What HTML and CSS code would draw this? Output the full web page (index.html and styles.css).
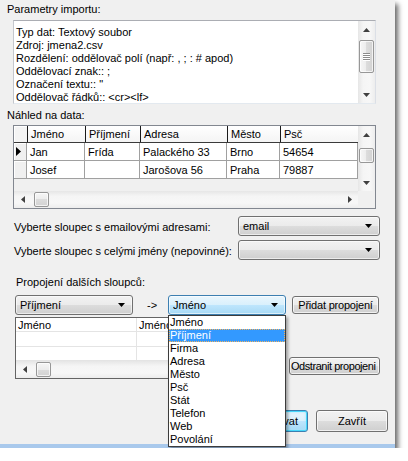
FILE: index.html
```html
<!DOCTYPE html>
<html lang="cs">
<head>
<meta charset="utf-8">
<title>Import</title>
<link rel="stylesheet" href="styles.css">
</head>
<body>
<div class="window">
  <div class="label label-params">Parametry importu:</div>
  <div class="memo">
    <div class="memo-text">
      <div>Typ dat: Textový soubor</div>
      <div>Zdroj: jmena2.csv</div>
      <div>Rozdělení: oddělovač polí (např: , ; : # apod)</div>
      <div>Oddělovací znak:: ;</div>
      <div>Označení textu:: "</div>
      <div>Oddělovač řádků:: &lt;cr&gt;&lt;lf&gt;</div>
    </div>
    <div class="vscroll memo-scroll">
      <div class="sb-btn"><svg class="arr" width="7" height="4" viewBox="0 0 7 4"><path d="M0 4h7L3.5 0z"/></svg></div>
      <div class="sb-track"><div class="thumb-v memo-thumb"><span class="grip-v"></span></div></div>
      <div class="sb-btn"><svg class="arr" width="7" height="4" viewBox="0 0 7 4"><path d="M0 0h7L3.5 4z"/></svg></div>
    </div>
  </div>

  <div class="label label-preview">Náhled na data:</div>
  <div class="grid1">
    <div class="g1-body">
      <div class="g1-row g1-head">
        <div class="ind ind-head"></div>
        <div class="hc w1">Jméno</div>
        <div class="hc w2">Příjmení</div>
        <div class="hc w3">Adresa</div>
        <div class="hc w4">Město</div>
        <div class="hc w5">Psč</div>
      </div>
      <div class="g1-row">
        <div class="ind"><svg width="5" height="9" viewBox="0 0 5 9"><path d="M0 0l5 4.5L0 9z"/></svg></div>
        <div class="dc w1">Jan</div>
        <div class="dc w2">Frída</div>
        <div class="dc w3">Palackého 33</div>
        <div class="dc w4">Brno</div>
        <div class="dc w5">54654</div>
      </div>
      <div class="g1-row">
        <div class="ind"></div>
        <div class="dc w1">Josef</div>
        <div class="dc w2"></div>
        <div class="dc w3">Jarošova 56</div>
        <div class="dc w4">Praha</div>
        <div class="dc w5">79887</div>
      </div>
      <div class="g1-blank"></div>
      <div class="hscroll">
        <div class="sb-btn-h"><svg class="arr" width="4" height="7" viewBox="0 0 4 7"><path d="M4 0v7L0 3.5z"/></svg></div>
        <div class="sb-track-h"><div class="thumb-h"></div></div>
        <div class="sb-btn-h"><svg class="arr" width="4" height="7" viewBox="0 0 4 7"><path d="M0 0v7L4 3.5z"/></svg></div>
      </div>
    </div>
    <div class="g1-side">
      <div class="vscroll g1-vscroll">
        <div class="sb-btn"><svg class="arr" width="7" height="4" viewBox="0 0 7 4"><path d="M0 4h7L3.5 0z"/></svg></div>
        <div class="sb-track"><div class="thumb-v g1-thumb"></div></div>
        <div class="sb-btn"><svg class="arr" width="7" height="4" viewBox="0 0 7 4"><path d="M0 0h7L3.5 4z"/></svg></div>
      </div>
      <div class="sb-corner"></div>
    </div>
  </div>

  <div class="field-row row-email">
    <div class="field-label">Vyberte sloupec s emailovými adresami:</div>
    <div class="combo combo-field"><span class="combo-val">email</span><svg class="combo-arr" width="7" height="4" viewBox="0 0 7 4"><path d="M0 0h7L3.5 4z"/></svg></div>
  </div>
  <div class="field-row row-names">
    <div class="field-label">Vyberte sloupec s celými jmény (nepovinné):</div>
    <div class="combo combo-field"><span class="combo-val"></span><svg class="combo-arr" width="7" height="4" viewBox="0 0 7 4"><path d="M0 0h7L3.5 4z"/></svg></div>
  </div>

  <div class="label label-links">Propojení dalších sloupců:</div>
  <div class="links-row">
    <div class="combo combo-map"><span class="combo-val">Příjmení</span><svg class="combo-arr" width="7" height="4" viewBox="0 0 7 4"><path d="M0 0h7L3.5 4z"/></svg></div>
    <span class="map-arrow">-&gt;</span>
    <div class="combo combo-map combo-focus"><span class="combo-val">Jméno</span><svg class="combo-arr" width="7" height="4" viewBox="0 0 7 4"><path d="M0 0h7L3.5 4z"/></svg></div>
    <button class="btn btn-add">Přidat propojení</button>
  </div>

  <div class="grid2-row">
    <div class="grid2">
      <div class="g2-row g2-head">
        <div class="g2c g2w1">Jméno</div>
        <div class="g2c g2w2">Jméno</div>
      </div>
      <div class="g2-row"><div class="g2c g2w1"></div><div class="g2c g2w2"></div></div>
      <div class="g2-row"><div class="g2c g2w1"></div><div class="g2c g2w2"></div></div>
      <div class="hscroll g2-hscroll">
        <div class="sb-btn-h"><svg class="arr" width="4" height="7" viewBox="0 0 4 7"><path d="M4 0v7L0 3.5z"/></svg></div>
        <div class="sb-track-h"><div class="thumb-h"></div></div>
      </div>
    </div>
    <button class="btn btn-remove">Odstranit propojeni</button>
  </div>

  <div class="bottom-row">
    <button class="btn btn-dialog btn-default">Importovat</button>
    <button class="btn btn-dialog">Zavřít</button>
  </div>

  <ul class="droplist">
    <li>Jméno</li>
    <li class="sel">Příjmení</li>
    <li>Firma</li>
    <li>Adresa</li>
    <li>Město</li>
    <li>Psč</li>
    <li>Stát</li>
    <li>Telefon</li>
    <li>Web</li>
    <li>Povolání</li>
  </ul>
</div>
</body>
</html>
```

FILE: styles.css
```css
* { box-sizing: border-box; }
html, body { margin: 0; padding: 0; background: #ffffff; }
body {
  font-family: "Liberation Sans", Arial, sans-serif;
  font-size: 11px;
  line-height: 13px;
  color: #000;
}

.window {
  position: relative;
  width: 395px;
  height: 448px;
  background: #f0f0f0;
  border-bottom: 4px solid #a9c9ec;
  box-shadow: 3px 4px 5px rgba(0, 0, 0, 0.6);
  display: flex;
  flex-direction: column;
}

.label { height: 13px; white-space: nowrap; }
.label-params { margin: 3px 0 0 7px; }
.label-preview { margin: 5px 0 0 7px; }
.label-links { margin: 16px 0 0 16px; }

/* memo */
.memo {
  margin: 4px 0 0 13px;
  width: 363px;
  height: 84px;
  background: #fff;
  border: 1px solid #dbdfe6;
  border-top-color: #abadb3;
  border-left-color: #c4c7cd;
  border-bottom-color: #e3e9ef;
  display: flex;
}
.memo-text { flex: 1; padding: 5px 0 0 2px; white-space: nowrap; overflow: hidden; }

/* scrollbars */
.vscroll {
  width: 17px;
  display: flex;
  flex-direction: column;
  background: linear-gradient(to right, #e6e6e6, #f5f5f5 30%, #f7f7f7 70%, #ededed);
}
.sb-btn { height: 17px; display: flex; align-items: center; justify-content: center; }
.sb-track { flex: 1; }
.arr { fill: #404040; display: block; }
.thumb-v {
  margin: 0 1px;
  border: 1px solid #979797;
  border-radius: 2px;
  background: linear-gradient(to right, #f6f6f6, #ececec 50%, #dcdcdc 50%, #d2d2d2);
  box-shadow: inset 0 0 0 1px rgba(255,255,255,0.7);
  display: flex;
  align-items: center;
  justify-content: center;
}
.memo-thumb { margin-top: 2px; height: 33px; }
.grip-v {
  width: 7px;
  height: 8px;
  background: repeating-linear-gradient(to bottom, #8a8a8a 0, #8a8a8a 1px, #ffffff 1px, #ffffff 2px);
}

.hscroll {
  height: 17px;
  display: flex;
  background: linear-gradient(to bottom, #e6e6e6, #f5f5f5 30%, #f7f7f7 70%, #ededed);
}
.sb-btn-h { width: 17px; display: flex; align-items: center; justify-content: center; }
.sb-track-h { flex: 1; display: flex; }
.thumb-h {
  margin: 1px 0 1px 3px;
  width: 15px;
  border: 1px solid #979797;
  border-radius: 2px;
  background: linear-gradient(to bottom, #f6f6f6, #ececec 50%, #dcdcdc 50%, #d2d2d2);
  box-shadow: inset 0 0 0 1px rgba(255,255,255,0.7);
}

/* grid 1 */
.grid1 {
  margin: 3px 0 0 13px;
  width: 363px;
  height: 84px;
  border: 1px solid #828790;
  display: flex;
  background: #f0f0f0;
}
.g1-body { width: 344px; display: flex; flex-direction: column; }
.g1-row { display: flex; height: 18px; }
.g1-head { height: 17px; border-bottom: 1px solid #3a3a3a; }
.g1-blank { flex: 1; }
.ind {
  width: 13px;
  background: #f0f0f0;
  border-right: 1px solid #a0a0a0;
  border-bottom: 1px solid #a0a0a0;
  box-shadow: inset 1px 1px 0 #ffffff;
  display: flex;
  align-items: center;
  padding-left: 2px;
}
.ind svg { fill: #000; }
.ind-head { border-bottom: none; border-right: none; background: #f4f4f4; }
.hc {
  background: linear-gradient(#ffffff, #f4f4f4);
  border-left: 1px solid #1a1a1a;
  padding: 2px 0 0 3px;
  white-space: nowrap;
  overflow: hidden;
}
.dc {
  background: #fff;
  border-right: 1px solid #a0a0a0;
  border-bottom: 1px solid #a0a0a0;
  padding: 3px 0 0 3px;
  white-space: nowrap;
  overflow: hidden;
}
.w1 { width: 58px; }
.w2 { width: 55px; }
.w3 { width: 87px; }
.w4 { width: 53px; }
.w5 { width: 78px; }
.g1-side { width: 17px; display: flex; flex-direction: column; }
.g1-vscroll { flex: 1; }
.g1-thumb { margin-top: 5px; height: 15px; }
.sb-corner { height: 17px; background: #f0f0f0; }

/* fields */
.field-row { display: flex; align-items: center; padding: 0 15px 0 14px; height: 20px; }
.row-email { margin-top: 7px; }
.row-names { margin-top: 4px; }
.field-label { flex: 1; white-space: nowrap; padding-top: 2px; }

.combo {
  height: 20px;
  border: 1px solid #707070;
  border-radius: 3px;
  background: linear-gradient(#f2f2f2, #ebebeb 50%, #dddddd 50%, #cfcfcf);
  box-shadow: inset 0 0 0 1px rgba(255,255,255,0.6);
  display: flex;
  align-items: center;
  padding: 0 7px 0 4px;
}
.combo-val { flex: 1; white-space: nowrap; overflow: hidden; }
.combo-arr { fill: #000; display: block; }
.combo-field { width: 142px; }
.combo-focus {
  border-color: #3c7fb1;
  background: linear-gradient(#eaf6fd, #d9f0fc 50%, #bee6fd 50%, #a7d9f5);
}

.links-row { display: flex; align-items: center; margin: 6px 0 0 15px; height: 20px; }
.combo-map { width: 118px; }
.map-arrow { width: 35px; padding-left: 14px; }

.btn {
  font: inherit;
  color: #000;
  margin: 0;
  padding: 0;
  border: 1px solid #707070;
  border-radius: 3px;
  background: linear-gradient(#f2f2f2, #ebebeb 50%, #dddddd 50%, #cfcfcf);
  box-shadow: inset 0 0 0 1px rgba(255,255,255,0.7);
  white-space: nowrap;
  overflow: hidden;
}
.btn-add { margin-left: 6px; width: 87px; height: 18px; letter-spacing: -0.2px; }

/* grid 2 */
.grid2-row { display: flex; margin: 2px 0 0 15px; }
.grid2 {
  width: 270px;
  height: 62px;
  border: 1px solid #646464;
  background: #fff;
  display: flex;
  flex-direction: column;
}
.g2-row { display: flex; height: 15px; }
.g2-head { height: 14px; }
.g2c {
  border-right: 1px solid #e4e4e4;
  border-bottom: 1px solid #e4e4e4;
  padding: 1px 0 0 2px;
  white-space: nowrap;
  overflow: hidden;
}
.g2w1 { width: 121px; }
.g2w2 { flex: 1; }
.g2-hscroll { margin-top: auto; }
.btn-remove { margin: 40px 0 0 4px; width: 91px; height: 18px; letter-spacing: -0.45px; text-align: left; padding-left: 1px; }

.bottom-row {
  margin-top: auto;
  margin-bottom: 12px;
  display: flex;
  justify-content: flex-end;
  gap: 8px;
  padding-right: 7px;
}
.btn-dialog { width: 72px; height: 22px; }
.btn-default {
  border-color: #3c7fb1;
  box-shadow: inset 0 0 0 1px #48d8fb, inset 0 0 3px 1px #a8e6fb;
  background: linear-gradient(#eaf6fd, #d9f0fc 50%, #bee6fd 50%, #a7d9f5);
}

/* drop-down list overlay */
.droplist {
  position: absolute;
  left: 168px;
  top: 315px;
  width: 118px;
  margin: 0;
  padding: 0;
  list-style: none;
  background: #fff;
  border: 1px solid #3c3c3c;
  box-shadow: 2px 2px 3px rgba(0,0,0,0.35);
}
.droplist li { height: 13px; padding-left: 1px; white-space: nowrap; }
.droplist li.sel {
  background: #3399ff;
  color: #fff;
  outline: 1px dotted #f4b35e;
  outline-offset: -1px;
}
```
